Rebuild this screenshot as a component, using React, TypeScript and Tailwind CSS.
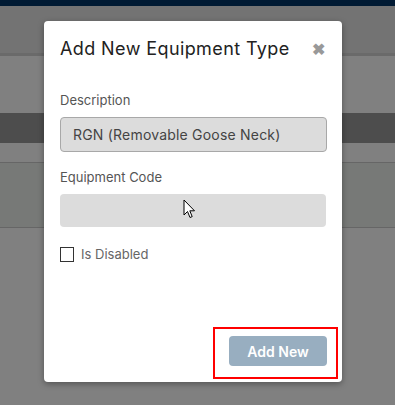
import React from 'react';

const font = { fontFamily: 'Inter, "Noto Sans", sans-serif' };

export default function App() {
  return (
    <div className="relative w-[395px] h-[405px] overflow-hidden bg-[#808080]" style={font}>
      {/* Dimmed page behind the modal */}
      <div className="flex flex-col">
        <div className="h-[6px] bg-[#001a33]" />
        <div className="h-[50px] bg-[#737373] border-b-[3px] border-[#6a6a6a]" />
        <div className="h-[57px] bg-[#808080]" />
        <div className="h-[30px] bg-[#4d4d4d]" />
        <div className="h-[20px] bg-[#808080] border-b border-[#666]" />
        <div className="h-[65px] bg-[#777977] border-b border-[#666]" />
      </div>

      {/* Modal */}
      <div className="absolute left-[44px] top-[21px] w-[298px] h-[361px] bg-white rounded-[4px] shadow-[0_2px_6px_rgba(0,0,0,0.35)] flex flex-col px-4">
        <div className="flex items-center justify-between pt-[14px]">
          <h2 className="text-[18px] text-[#222] tracking-[0.4px]">Add New Equipment Type</h2>
          <span className="text-[16px] font-bold text-[#999] mr-[1px] leading-none">✖</span>
        </div>

        <label className="mt-[30px] text-[13px] text-[#555] leading-4">Description</label>
        <div className="mt-[9px] h-[35px] w-[267px] rounded-[4px] border border-[#a8a8a8] bg-[#dcdcdc] flex items-center px-3 text-[14px] text-[#444] tracking-[0.2px]">
          RGN (Removable Goose Neck)
        </div>

        <label className="mt-[17px] text-[13px] text-[#555] leading-4">Equipment Code</label>
        <div className="relative mt-[9px] h-[33px] w-[266px] rounded-[4px] bg-[#dcdcdc]">
          <svg className="absolute left-[123px] top-[5px]" width="13" height="20" viewBox="0 0 13 20">
            <path d="M1 1 L1 16 L4.5 12.5 L7 18.5 L9.2 17.6 L6.8 11.8 L11.5 11.8 Z" fill="white" stroke="black" strokeWidth="1" strokeLinejoin="round" />
          </svg>
        </div>

        <div className="mt-[18px] flex items-center gap-[7px]">
          <span className="w-[14px] h-[15px] border border-[#333] bg-white" />
          <span className="text-[13px] text-[#666]">Is Disabled</span>
        </div>

        <div className="flex-1" />
        <div className="flex justify-end pb-[3px] mr-[-12px]">
          <div className="border-2 border-[#ff0000] pl-[14px] pr-[9px] pt-[7px] pb-[11px]">
            <button className="w-[98px] h-[30px] rounded-[4px] bg-[#98aec0] text-white text-[14px] font-semibold">
              Add New
            </button>
          </div>
        </div>
      </div>
    </div>
  );
}
